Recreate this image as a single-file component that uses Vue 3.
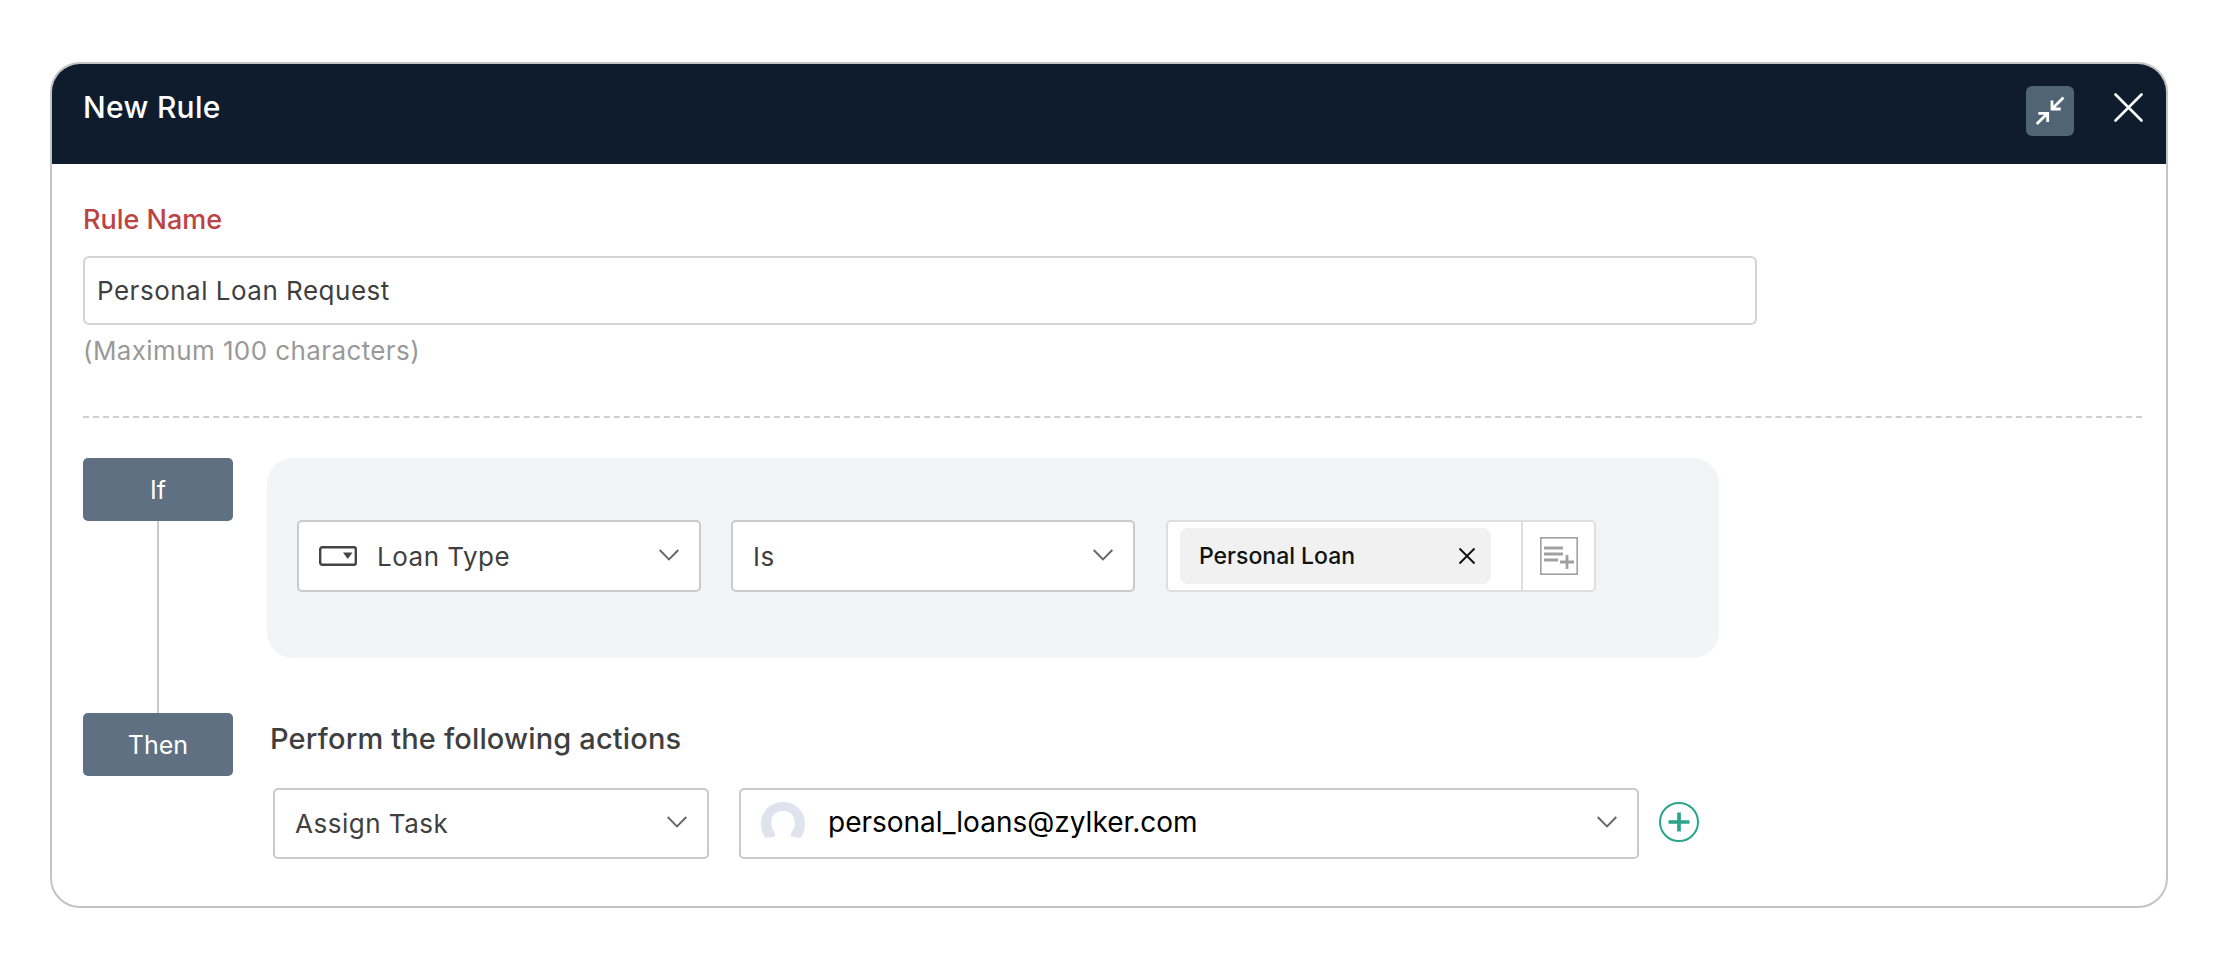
<script setup>
const conditions = [
  { label: 'Loan Type', icon: true },
  { label: 'Is', icon: false }
]
</script>

<template>
  <div class="page">
    <section class="card">
      <header class="head">
        <h1 class="title">New Rule</h1>
        <div class="head-actions">
          <button class="shrink" aria-label="Collapse">
            <svg width="48" height="50" viewBox="0 0 48 50" fill="none" stroke="#fff" stroke-width="2.800">
              <path d="M37.500 11.500 26 23M26 14.500V23H34.700" />
              <path d="M10.700 38 21.700 27.300M12.300 27.300H21.700V36" />
            </svg>
          </button>
          <button class="close" aria-label="Close">
            <svg width="29" height="29" viewBox="0 0 29 29" fill="none" stroke="#fff" stroke-width="2.600" stroke-linecap="round">
              <path d="M1.500 1.500 27.500 27.500M27.500 1.500 1.500 27.500" />
            </svg>
          </button>
        </div>
      </header>

      <div class="body">
        <label class="field-label">Rule Name</label>
        <div class="name-input">Personal Loan Request</div>
        <p class="hint">(Maximum 100 characters)</p>
        <div class="divider"></div>

        <div class="rule">
          <div class="side">
            <div class="tag">If</div>
            <div class="connector"></div>
            <div class="tag">Then</div>
          </div>

          <div class="main">
            <div class="panel">
              <div v-for="c in conditions" :key="c.label" class="select cond">
                <svg v-if="c.icon" class="type-icon" width="38" height="20" viewBox="0 0 38 20" fill="none">
                  <rect x="1.200" y="1.200" width="35.600" height="17.600" rx="2" stroke="#444" stroke-width="2.400" />
                  <path d="M24 6.500h9.500l-4.750 6.500z" fill="#444" />
                </svg>
                <span class="select-text">{{ c.label }}</span>
                <svg class="chev" width="20" height="12" viewBox="0 0 20 12" fill="none" stroke="#666" stroke-width="1.900">
                  <path d="M.7 1 10 10.500 19.300 1" />
                </svg>
              </div>

              <div class="value-box">
                <div class="value-main">
                  <div class="chip">
                    <span>Personal Loan</span>
                    <svg width="18" height="18" viewBox="0 0 18 18" fill="none" stroke="#111" stroke-width="1.900">
                      <path d="M1.500 1.500 16.500 16.500M16.500 1.500 1.500 16.500" />
                    </svg>
                  </div>
                </div>
                <div class="value-add">
                  <svg width="38" height="38" viewBox="0 0 38 38" fill="none">
                    <rect x=".8" y=".8" width="36.400" height="36.400" fill="#fff" stroke="#a0a0a0" stroke-width="1.600" />
                    <path d="M4 11H23M4 17H23M4 23H18M20 25H34M27 18V32" stroke="#a0a0a0" stroke-width="2.800" />
                  </svg>
                </div>
              </div>
            </div>

            <div class="actions">
              <h2 class="actions-title">Perform the following actions</h2>
              <div class="action-row">
                <div class="select action">
                  <span class="select-text">Assign Task</span>
                  <svg class="chev" width="20" height="12" viewBox="0 0 20 12" fill="none" stroke="#666" stroke-width="1.900">
                    <path d="M.7 1 10 10.500 19.300 1" />
                  </svg>
                </div>
                <div class="select assignee">
                  <svg class="avatar" width="44" height="36" viewBox="0 0 44 36">
                    <path d="M22 0C10 0 0 9 0 21.500 0 27 1.500 32 4.500 36L14 34.500C14.500 32 13.500 30 12 28 9 23.500 8.500 9 22 9S35 23.500 32 28C30.500 30 29.500 32 30 34.500L39.500 36C42.500 32 44 27 44 21.500 44 9 34 0 22 0Z" fill="#dfe3ee" />
                  </svg>
                  <span class="assignee-text">personal_loans@zylker.com</span>
                  <svg class="chev" width="20" height="12" viewBox="0 0 20 12" fill="none" stroke="#666" stroke-width="1.900">
                    <path d="M.7 1 10 10.500 19.300 1" />
                  </svg>
                </div>
                <button class="add" aria-label="Add action">
                  <svg width="40" height="40" viewBox="0 0 40 40" fill="none" stroke="#2aa58a">
                    <circle cx="20" cy="20" r="19" stroke-width="2" />
                    <path d="M20 10.500V29.500M9.500 20H30.500" stroke-width="3.700" />
                  </svg>
                </button>
              </div>
            </div>
          </div>
        </div>
      </div>
    </section>
  </div>
</template>

<style scoped>
.page {
  padding: 62px 51px 0 50px;
  font-family: Inter, "Liberation Sans", sans-serif;
  color: #3f3f3f;
}
.card {
  box-sizing: border-box;
  height: 846px;
  background: #fff;
  border: 2px solid #c4c4c4;
  border-radius: 30px;
  overflow: hidden;
}
.head {
  height: 100px;
  background: #0f1c2d;
  display: flex;
  align-items: center;
  justify-content: space-between;
  padding: 0 23px 0 31px;
}
.title {
  margin: 0 0 14px;
  font-size: 30px;
  font-weight: 500;
  color: #fff;
  letter-spacing: 0.3px;
}
.head-actions {
  display: flex;
  align-items: center;
  gap: 40px;
  padding-bottom: 6px;
}
button {
  padding: 0;
  border: 0;
  background: none;
  display: flex;
  align-items: center;
  justify-content: center;
}
.shrink {
  width: 48px;
  height: 50px;
  border-radius: 6px;
  background: #4f6474;
}
.close {
  margin-bottom: 7px;
}
.body {
  padding: 41px 24px 0 31px;
}
.field-label {
  display: block;
  font-size: 27px;
  line-height: 30px;
  font-weight: 500;
  color: #bd4343;
}
.name-input {
  box-sizing: border-box;
  width: 1674px;
  height: 69px;
  margin-top: 21px;
  padding: 0 12px;
  display: flex;
  align-items: center;
  border: 2px solid #d4d4d4;
  border-radius: 6px;
  font-size: 26px;
  letter-spacing: 0.5px;
}
.hint {
  margin: 10px 0 0;
  font-size: 26px;
  line-height: 32px;
  color: #999;
  letter-spacing: 0.4px;
}
.divider {
  margin-top: 49px;
  border-top: 2px dashed #cfcfcf;
}
.rule {
  display: flex;
  margin-top: 40px;
}
.side {
  width: 150px;
  display: flex;
  flex-direction: column;
  align-items: center;
}
.tag {
  flex: none;
  width: 150px;
  height: 63px;
  display: flex;
  align-items: center;
  justify-content: center;
  background: #5f7082;
  border-radius: 5px;
  color: #fff;
  font-size: 25px;
}
.connector {
  width: 2px;
  height: 192px;
  background: #c8c8c8;
}
.main {
  margin-left: 34px;
}
.panel {
  box-sizing: border-box;
  width: 1452px;
  height: 200px;
  padding: 0 0 4px 30px;
  display: flex;
  align-items: center;
  gap: 30px;
  background: #f3f4f6;
  border-radius: 26px;
}
.select {
  box-sizing: border-box;
  height: 71px;
  display: flex;
  align-items: center;
  background: #fff;
  border: 2px solid #cacaca;
  border-radius: 5px;
}
.cond {
  width: 404px;
  height: 72px;
  padding: 0 20px;
}
.type-icon {
  margin-right: 20px;
}
.select-text {
  flex: 1;
  font-size: 26px;
  letter-spacing: 0.5px;
}
.chev {
  flex: none;
  margin-top: -3px;
}
.value-box {
  box-sizing: border-box;
  width: 430px;
  height: 72px;
  margin-left: 1px;
  display: flex;
  background: #fff;
  border: 2px solid #dedede;
  border-radius: 5px;
}
.value-main {
  flex: 1;
  padding: 6px 0 0 12px;
  border-right: 2px solid #dedede;
}
.chip {
  box-sizing: border-box;
  width: 311px;
  height: 56px;
  padding: 0 15px 0 19px;
  display: flex;
  align-items: center;
  justify-content: space-between;
  background: #f1f1f1;
  border-radius: 8px;
  font-size: 23px;
  font-weight: 500;
  color: #111;
}
.value-add {
  flex: none;
  width: 71px;
  display: flex;
  align-items: center;
  justify-content: center;
}
.actions {
  margin-top: 64px;
  margin-left: 3px;
}
.actions-title {
  margin: 0;
  font-size: 29px;
  line-height: 34px;
  font-weight: 500;
  letter-spacing: 0.15px;
}
.action-row {
  display: flex;
  align-items: center;
  margin-top: 32px;
  margin-left: 3px;
}
.action {
  width: 436px;
  padding: 0 20px;
}
.assignee {
  width: 900px;
  margin-left: 30px;
  padding: 0 20px;
}
.avatar {
  margin-right: 23px;
  margin-top: -7px;
}
.assignee-text {
  flex: 1;
  margin-top: -4px;
  font-size: 28px;
  font-weight: 400;
  color: #000;
}
.add {
  margin-left: 20px;
  margin-top: -3px;
}
</style>
